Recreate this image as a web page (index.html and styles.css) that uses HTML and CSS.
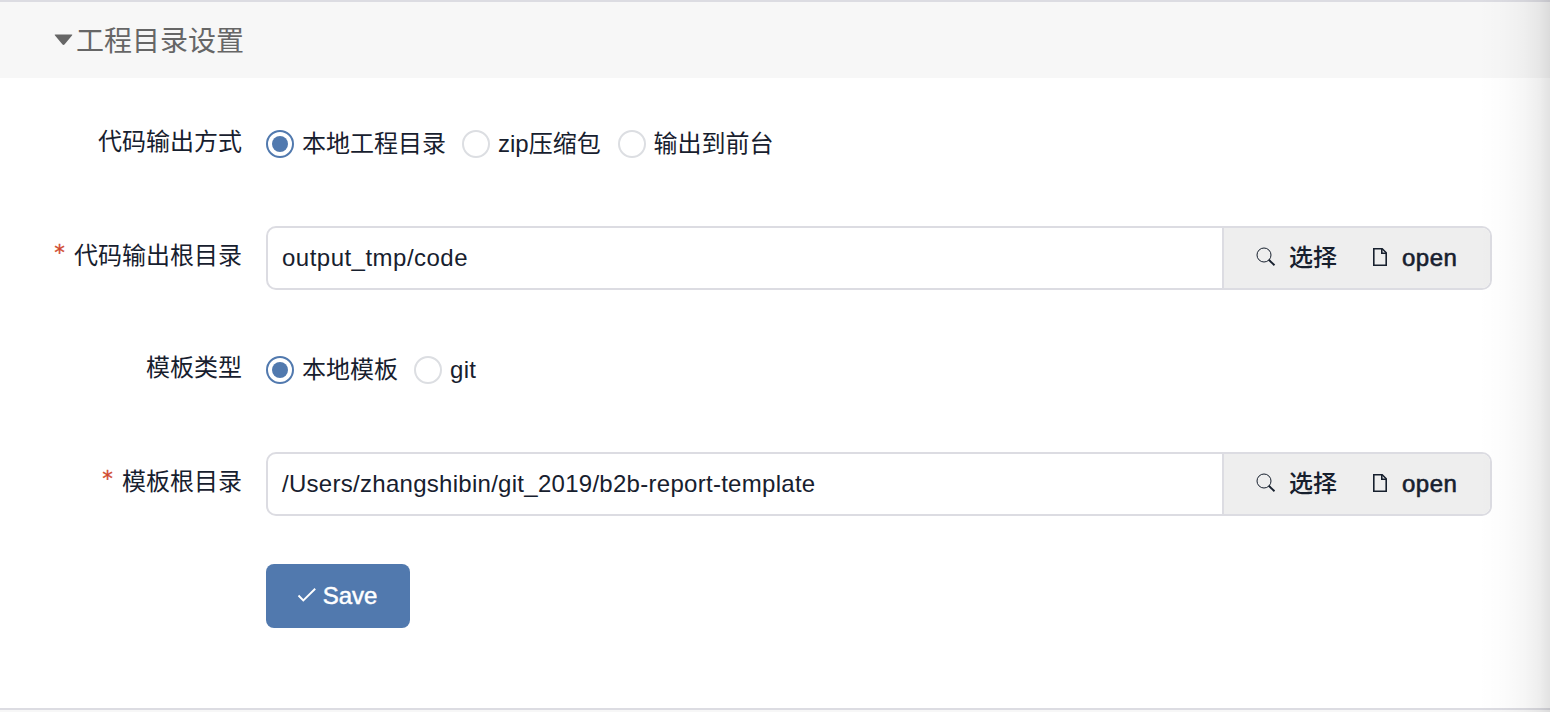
FILE: index.html
```html
<!DOCTYPE html>
<html lang="zh-CN">
<head>
<meta charset="utf-8">
<title>工程目录设置</title>
<link rel="stylesheet" href="styles.css">
</head>
<body>
<section class="panel">
  <header class="panel-title">
    <svg class="caret" width="19" height="12" viewBox="0 0 19 12"><path d="M1.400.5h16.200q1.400 0 .4 1.100L10.700 10.300q-1.200 1.200-2.400 0L1 1.600Q0 .5 1.400.5z" fill="#666"/></svg>
    <span class="heading">工程目录设置</span>
  </header>
  <form class="form">
    <div class="row">
      <div class="label">代码输出方式</div>
      <div class="radios">
        <label class="radio on"><i class="dot"></i><span>本地工程目录</span></label>
        <label class="radio"><i class="dot"></i><span class="zip">zip压缩包</span></label>
        <label class="radio"><i class="dot"></i><span>输出到前台</span></label>
      </div>
    </div>
    <div class="row">
      <div class="label"><span class="required">*</span>代码输出根目录</div>
      <div class="group">
        <div class="field"><span class="path-code">output_tmp/code</span></div>
        <div class="append">
          <svg class="search" width="20" height="20" viewBox="0 0 20 20" fill="none" stroke="#17202e"><circle cx="8" cy="8" r="7" stroke-width="1"/><path d="M12.800 12.800l5.700 5.500" stroke-width="1.900"/></svg>
          <span class="choose">选择</span>
          <svg class="file" width="16" height="20" viewBox="0 0 16 20" fill="none" stroke="#17202e" stroke-width="1.600"><path d="M1.800 1.800h8.400l4 4v12.400H1.800z"/><path d="M9.800 2v4.200H14"/></svg>
          <span class="open">open</span>
        </div>
      </div>
    </div>
    <div class="row">
      <div class="label">模板类型</div>
      <div class="radios">
        <label class="radio on"><i class="dot"></i><span>本地模板</span></label>
        <label class="radio"><i class="dot"></i><span class="git">git</span></label>
      </div>
    </div>
    <div class="row">
      <div class="label"><span class="required">*</span>模板根目录</div>
      <div class="group">
        <div class="field"><span class="path-template">/Users/zhangshibin/git_2019/b2b-report-template</span></div>
        <div class="append">
          <svg class="search" width="20" height="20" viewBox="0 0 20 20" fill="none" stroke="#17202e"><circle cx="8" cy="8" r="7" stroke-width="1"/><path d="M12.800 12.800l5.700 5.500" stroke-width="1.900"/></svg>
          <span class="choose">选择</span>
          <svg class="file" width="16" height="20" viewBox="0 0 16 20" fill="none" stroke="#17202e" stroke-width="1.600"><path d="M1.800 1.800h8.400l4 4v12.400H1.800z"/><path d="M9.800 2v4.200H14"/></svg>
          <span class="open">open</span>
        </div>
      </div>
    </div>
    <div class="row">
      <div class="label"></div>
      <button class="save" type="button">
        <svg class="check" width="20" height="16" viewBox="0 0 20 16" fill="none" stroke="#fff" stroke-width="1.900"><path d="M1.500 8.500l4.800 4.900L18.200 1.800"/></svg>
        <span>Save</span>
      </button>
    </div>
  </form>
</section>
<div class="edge-shadow"></div>
</body>
</html>
```
FILE: styles.css
```css
* { box-sizing: border-box; }
body {
  margin: 0;
  height: 712px;
  overflow: hidden;
  background: #f7f7f7;
  color: #17202e;
  font: 24px/36px "Liberation Sans", "Noto Sans CJK SC", sans-serif;
}
.panel {
  height: 710px;
  background: #fff;
  border-top: 2px solid #dcdce2;
  border-bottom: 2px solid #dcdce2;
}
.panel-title {
  display: flex;
  align-items: center;
  gap: 3px;
  height: 76px;
  padding-left: 54px;
  background: #f7f7f7;
  color: #666;
  font-size: 28px;
}
.heading { padding-top: 3px; }
.form { padding: 34px 58px 0 0; }
.row {
  display: grid;
  grid-template-columns: 242px 1fr;
  column-gap: 24px;
  align-items: center;
  height: 64px;
  margin-bottom: 48px;
}
.row:nth-child(odd):not(:last-child) { margin-bottom: 50px; }
.label {
  display: flex;
  justify-content: flex-end;
  align-items: center;
  height: 36px;
  margin-bottom: 4px;
}
.required {
  margin: 0 8px 6px 0;
  color: #d0482c;
  font-family: "DejaVu Sans Mono", monospace;
  font-size: 21px;
  -webkit-text-stroke: .3px currentColor;
}
.radios { display: flex; gap: 16px; }
.radio { display: flex; align-items: center; gap: 8px; }
.dot {
  display: grid;
  place-items: center;
  width: 28px;
  height: 28px;
  border: 2px solid #dcdee2;
  border-radius: 50%;
}
.zip { padding-right: .9px; }
.zip + span { margin-left: -1px; }
.git { letter-spacing: .3px; }
.on .dot { border-color: #5179ae; }
.on .dot::after {
  content: "";
  width: 16px;
  height: 16px;
  border-radius: 50%;
  background: #5179ae;
}
.group {
  display: flex;
  height: 64px;
  border: 2px solid #dcdce2;
  border-radius: 10px;
  overflow: hidden;
}
.field { flex: 1; padding: 12px 14px; }
.path-code { letter-spacing: .48px; }
.path-template { letter-spacing: .28px; }
.append {
  display: flex;
  align-items: center;
  width: 268px;
  padding-left: 32px;
  border-left: 2px solid #dcdce2;
  background: #eee;
}
.search { margin-bottom: 2px; }
.choose { margin: 0 36px 0 13px; font-weight: 500; }
.file { margin-bottom: 2px; margin-left: -1px; }
.open { margin-left: 14px; letter-spacing: .5px; -webkit-text-stroke: .6px currentColor; }
.save {
  display: flex;
  align-items: center;
  justify-content: center;
  gap: 6px;
  width: 144px;
  height: 64px;
  padding: 0 2px 0 0;
  border: 0;
  border-radius: 8px;
  background: #5179ae;
  color: #fff;
  font: inherit;
  -webkit-text-stroke: .5px currentColor;
}
.check { margin-bottom: 2px; }
.edge-shadow {
  position: absolute;
  top: 0;
  right: 0;
  width: 72px;
  height: 712px;
  background: linear-gradient(to right, rgba(0,0,0,0), rgba(0,0,0,.012) 35%, rgba(0,0,0,.035) 65%, rgba(0,0,0,.065) 85%, rgba(0,0,0,.115));
}
```
